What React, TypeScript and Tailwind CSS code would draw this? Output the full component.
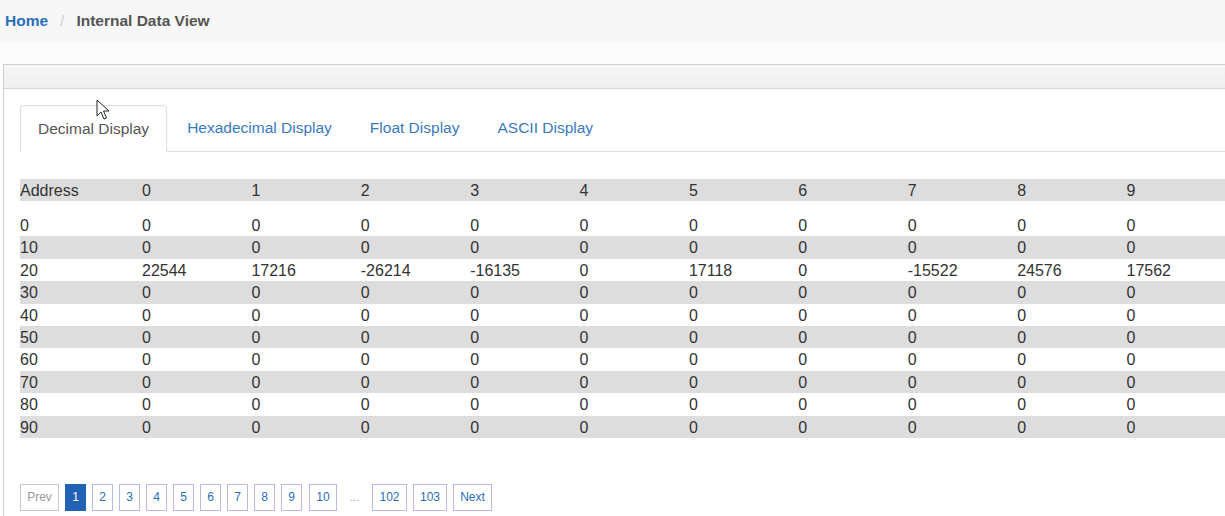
import React from 'react'

const COLS = ['0', '1', '2', '3', '4', '5', '6', '7', '8', '9']

const ROWS: { addr: string; values: string[] }[] = [
  { addr: '0', values: Array(10).fill('0') },
  { addr: '10', values: Array(10).fill('0') },
  { addr: '20', values: ['22544', '17216', '-26214', '-16135', '0', '17118', '0', '-15522', '24576', '17562'] },
  { addr: '30', values: Array(10).fill('0') },
  { addr: '40', values: Array(10).fill('0') },
  { addr: '50', values: Array(10).fill('0') },
  { addr: '60', values: Array(10).fill('0') },
  { addr: '70', values: Array(10).fill('0') },
  { addr: '80', values: Array(10).fill('0') },
  { addr: '90', values: Array(10).fill('0') },
]

const TABS = ['Decimal Display', 'Hexadecimal Display', 'Float Display', 'ASCII Display']

const PAGES = ['2', '3', '4', '5', '6', '7', '8', '9', '10']

function Cursor() {
  return (
    <svg className="absolute left-[96px] top-[99px]" width="14" height="22" viewBox="0 0 14 22">
      <path d="M1 1 L1 17 L5 13 L8 20 L10.5 19 L7.5 12 L13 12 Z" fill="#fff" stroke="#222" strokeWidth="1" strokeLinejoin="round" />
    </svg>
  )
}

export default function App() {
  return (
    <div className="relative w-[1225px] h-[516px] overflow-hidden bg-white text-[16px] text-[#333]" style={{ fontFamily: '"Liberation Sans", Arial, sans-serif' }}>
      {/* Breadcrumb */}
      <div className="h-[42px] bg-[#f7f7f7] flex items-center pl-[5px] font-bold text-[15.5px]">
        <span className="text-[#2a6ebb]">Home</span>
        <span className="text-[#ccc] font-normal mx-[12px]">/</span>
        <span className="text-[#555]">Internal Data View</span>
      </div>
      <div className="h-[22px] bg-[#fbfbfb]" />

      {/* Panel */}
      <div className="ml-[3px] border-l border-t border-[#cfcfcf] h-[460px]">
        <div className="h-[24px] bg-gradient-to-b from-[#f7f7f7] to-[#efefef] border-b border-[#d6d6d6]" />
        <div className="pl-[16px] pt-[16px]">
          {/* Tabs */}
          <div className="flex border-b border-[#ddd] h-[47px] text-[15.5px]">
            {TABS.map((t, i) => (
              <div
                key={t}
                className={
                  i === 0
                    ? 'mr-[2px] -mb-px px-[17px] h-[47px] flex items-center bg-white border border-[#ddd] border-b-white rounded-t-[4px] text-[#555]'
                    : 'mr-[2px] px-[18px] h-[46px] flex items-center text-[#3a7abf]'
                }
              >
                {t}
              </div>
            ))}
          </div>

          {/* Table */}
          <div className="mt-[27px] w-[1216px]">
            <div className="grid grid-cols-[122px_repeat(10,109.4px)] h-[22px] items-center bg-[#dddddd]">
              <div>Address</div>
              {COLS.map((c) => (
                <div key={c}>{c}</div>
              ))}
            </div>
            <div className="mt-[13px]">
              {ROWS.map((r, i) => (
                <div
                  key={r.addr}
                  className={`grid grid-cols-[122px_repeat(10,109.4px)] h-[22.4px] items-center ${i % 2 === 1 ? 'bg-[#dddddd]' : 'bg-white'}`}
                >
                  <div>{r.addr}</div>
                  {r.values.map((v, j) => (
                    <div key={j}>{v}</div>
                  ))}
                </div>
              ))}
            </div>
          </div>

          {/* Pagination */}
          <div className="mt-[46px] flex items-center gap-[6px] text-[12px]">
            <div className="h-[27px] w-[39px] flex items-center justify-center border border-[#c8c8c8] text-[#999]">Prev</div>
            <div className="h-[27px] w-[21px] flex items-center justify-center bg-[#2262b6] text-white border border-[#2262b6]">1</div>
            {PAGES.map((p) => (
              <div
                key={p}
                className={`h-[27px] ${p === '10' ? 'w-[28px] ml-[1px]' : 'w-[21px]'} flex items-center justify-center border border-[#b9b9e6] text-[#2a6ebb]`}
              >
                {p}
              </div>
            ))}
            <div className="w-[23px] text-center text-[#999] text-[10px]">...</div>
            <div className="h-[27px] w-[35px] flex items-center justify-center border border-[#b9b9e6] text-[#2a6ebb]">102</div>
            <div className="h-[27px] w-[34px] flex items-center justify-center border border-[#b9b9e6] text-[#2a6ebb]">103</div>
            <div className="h-[27px] w-[39px] flex items-center justify-center border border-[#b9b9e6] text-[#2a6ebb]">Next</div>
          </div>
        </div>
      </div>
      <Cursor />
    </div>
  )
}
